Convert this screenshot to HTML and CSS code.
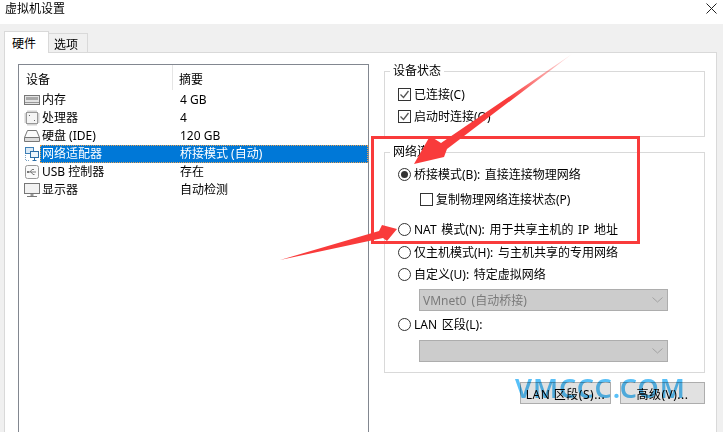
FILE: index.html
```html
<!DOCTYPE html>
<html>
<head>
    <meta charset="UTF-8">
    <title>虚拟机设置</title>
    <link rel="stylesheet" href="styles.css">
</head>
<body>
    <div class="titlebar">
        <span class="title">虚拟机设置</span>
        <svg class="close" width="11" height="11" viewBox="0 0 11 11"><path d="M0.5 0.5L10.5 10.5M10.5 0.5L0.5 10.5" stroke="#222" fill="none"/></svg>
    </div>

    <div class="tabs">
        <div class="tab active">硬件</div>
        <div class="tab">选项</div>
    </div>

    <div class="panel">
        <div class="list">
            <div class="list-head">
                <div class="head-name">设备</div>
                <div class="head-summary">摘要</div>
            </div>
            <div class="row">
                <svg class="icon" width="16" height="16" viewBox="0 0 16 16"><rect x="0.5" y="3.5" width="15" height="9" fill="#e4e4e4" stroke="#777"/><rect x="2" y="5" width="12" height="3" fill="#a8a8a8"/><path d="M1 10.5H15" stroke="#999"/></svg>
                <div class="row-body"><span class="name">内存</span><span class="summary">4 GB</span></div>
            </div>
            <div class="row">
                <svg class="icon" width="16" height="16" viewBox="0 0 16 16"><rect x="2.5" y="2.5" width="11" height="11" fill="#f4f4f4" stroke="#999"/><path d="M4 0.5V2M6 0.5V2M8 0.5V2M10 0.5V2M12 0.5V2M4 14V15.5M6 14V15.5M8 14V15.5M10 14V15.5M12 14V15.5M0.5 4H2M0.5 6H2M0.5 8H2M0.5 10H2M0.5 12H2M14 4H15.5M14 6H15.5M14 8H15.5M14 10H15.5M14 12H15.5" stroke="#a5a5a5" fill="none"/><rect x="5" y="5" width="1" height="1" fill="#666"/><rect x="10" y="10" width="1" height="1" fill="#666"/></svg>
                <div class="row-body"><span class="name">处理器</span><span class="summary">4</span></div>
            </div>
            <div class="row">
                <svg class="icon" width="16" height="16" viewBox="0 0 16 16"><path d="M0.5 9.5L3.5 2.5H12.5L15.5 9.5V13.5H0.5Z" fill="#fbfbfb" stroke="#777"/><path d="M0.5 9.5H15.5" stroke="#777"/><rect x="1" y="10" width="14" height="3" fill="#ddd"/></svg>
                <div class="row-body"><span class="name">硬盘 (IDE)</span><span class="summary">120 GB</span></div>
            </div>
            <div class="row selected">
                <svg class="icon" width="16" height="16" viewBox="0 0 16 16"><rect x="1.5" y="1.5" width="8" height="6" fill="#dcebf7" stroke="#3f7fb5"/><rect x="6.5" y="5.5" width="8" height="6" fill="#eef6fc" stroke="#2d6fa8"/><path d="M10.5 12V14M8.5 14.5H12.5" stroke="#2d6fa8"/><path d="M1.5 9V14.5H6" stroke="#7aa3c4" stroke-dasharray="1 1" fill="none"/></svg>
                <div class="row-body"><span class="name">网络适配器</span><span class="summary">桥接模式 (自动)</span></div>
            </div>
            <div class="row">
                <svg class="icon" width="16" height="16" viewBox="0 0 16 16"><rect x="1.5" y="1.5" width="13" height="13" rx="2" fill="#fafafa" stroke="#999"/><path d="M4 8H12M6 8L8 5.5H10M7 8L9 10.5H10.5" stroke="#777" fill="none"/><rect x="3" y="7" width="2" height="2" fill="#777"/></svg>
                <div class="row-body"><span class="name">USB 控制器</span><span class="summary">存在</span></div>
            </div>
            <div class="row">
                <svg class="icon" width="16" height="16" viewBox="0 0 16 16"><rect x="0.5" y="1.5" width="15" height="10" fill="#f2f2f2" stroke="#777"/><path d="M8 12V14" stroke="#999" stroke-width="3"/><path d="M3 14.5H13" stroke="#777"/></svg>
                <div class="row-body"><span class="name">显示器</span><span class="summary">自动检测</span></div>
            </div>
        </div>

        <div class="side">
            <fieldset class="group group-status">
                <legend>设备状态</legend>
                <div class="opt"><span class="check on"><svg width="11" height="11" viewBox="0 0 11 11"><path d="M1.5 5.5L4.5 8.5L9.5 2" stroke="#555" stroke-width="1.3" fill="none"/></svg></span>已连接(C)</div>
                <div class="opt"><span class="check on"><svg width="11" height="11" viewBox="0 0 11 11"><path d="M1.5 5.5L4.5 8.5L9.5 2" stroke="#555" stroke-width="1.3" fill="none"/></svg></span>启动时连接(O)</div>
            </fieldset>

            <fieldset class="group group-net">
                <legend>网络连接</legend>
                <div class="opt"><span class="radio on"></span>桥接模式(B): 直接连接物理网络</div>
                <div class="opt opt-sub"><span class="check"></span>复制物理网络连接状态(P)</div>
                <div class="opt opt-nat"><span class="radio"></span>NAT 模式(N): 用于共享主机的 IP 地址</div>
                <div class="opt opt-host"><span class="radio"></span>仅主机模式(H): 与主机共享的专用网络</div>
                <div class="opt"><span class="radio"></span>自定义(U): 特定虚拟网络</div>
                <div class="combo combo-vmnet">
                    <span>VMnet0 (自动桥接)</span>
                    <svg width="11" height="6" viewBox="0 0 11 6"><path d="M0.5 0.5L5.5 5L10.5 0.5" stroke="#a2a2a2" fill="none"/></svg>
                </div>
                <div class="opt opt-lan"><span class="radio"></span>LAN 区段(L):</div>
                <div class="combo combo-lan">
                    <span></span>
                    <svg width="11" height="6" viewBox="0 0 11 6"><path d="M0.5 0.5L5.5 5L10.5 0.5" stroke="#a2a2a2" fill="none"/></svg>
                </div>
            </fieldset>

            <div class="actions">
                <button class="btn btn-lan">LAN 区段(S)...</button>
                <button class="btn btn-adv">高级(V)...</button>
            </div>
        </div>
    </div>

    <!-- annotations on top of the dialog -->
    <svg class="marks" width="723" height="432" viewBox="0 0 723 432">
        <defs>
            <linearGradient id="fade" gradientUnits="userSpaceOnUse" x1="572" y1="54" x2="510" y2="100">
                <stop offset="0" stop-color="#f93b3b" stop-opacity="0.1"/>
                <stop offset="1" stop-color="#f93b3b"/>
            </linearGradient>
        </defs>
        <rect x="372.5" y="137.5" width="266" height="105" fill="none" stroke="#f93b3b" stroke-width="3"/>
        <polygon points="572,54 447,149 444,157 414,164 430,136 441,143" fill="url(#fade)"/>
        <polygon points="280,260 379,231 382,225 397,229 387,241 383,238" fill="#f93b3b"/>
    </svg>
    <div class="watermark">VMCCC.COM</div>
</body>
</html>
```

FILE: styles.css
```css
body {
    position: relative;
    width: 723px;
    height: 432px;
    margin: 0;
    overflow: hidden;
    background-color: #f0f0f0;
    color: #000;
    font-family: "Noto Sans", "Noto Sans CJK SC", sans-serif;
    font-size: 12px;
}
.titlebar {
    display: flex;
    justify-content: space-between;
    height: 24px;
    padding: 0 6px 0 5px;
    background-color: #fff;
}
.title {
    line-height: 17px;
}
.close {
    margin-top: 3px;
}
.tabs {
    display: flex;
    align-items: flex-end;
    height: 28px;
    padding-left: 4px;
}
.tab {
    box-sizing: border-box;
    width: 39px;
    height: 19px;
    border: 1px solid #d9d9d9;
    border-bottom: none;
    border-left: none;
    padding-left: 5px;
    line-height: 21px;
}
.tab.active {
    position: relative;
    z-index: 1;
    width: 45px;
    height: 22px;
    margin-bottom: -1px;
    border-left: 1px solid #d9d9d9;
    padding-left: 7px;
    background-color: #fff;
    line-height: 23px;
}
.panel {
    display: flex;
    gap: 15px;
    box-sizing: border-box;
    width: 713px;
    height: 400px;
    margin-left: 4px;
    border: 1px solid #d9d9d9;
    padding: 11px 0 0 13px;
    background-color: #fff;
}
.list {
    box-sizing: border-box;
    width: 351px;
    border: 1px solid #828790;
}
.list-head {
    display: flex;
    height: 26px;
    line-height: 26px;
}
.head-name {
    box-sizing: border-box;
    width: 154px;
    height: 25px;
    border-right: 1px solid #e5e5e5;
    padding-top: 2px;
    padding-left: 7px;
}
.head-summary {
    padding-top: 2px;
    padding-left: 6px;
}
.row {
    display: flex;
    align-items: center;
    height: 18px;
    padding-left: 5px;
}
.icon {
    flex: none;
}
.row-body {
    display: flex;
    flex: 1;
    box-sizing: border-box;
    height: 18px;
    padding-left: 2px;
    line-height: 18px;
}
.row.selected .row-body {
    outline: 1px dotted #e8a050;
    outline-offset: -1px;
    background-color: #0078d7;
    color: #fff;
}
.name {
    width: 138px;
}
.side {
    width: 321px;
}
.group {
    box-sizing: border-box;
    margin: 0;
    border: 1px solid #d9d9d9;
    padding: 0 0 0 13px;
}
.group legend {
    margin-left: -8px;
    padding: 0 3px;
    line-height: 16px;
}
.group-status {
    margin-top: -1px;
    padding-top: 4px;
    padding-bottom: 9px;
}
.group-net {
    margin-top: 7px;
    padding-top: 3px;
    padding-bottom: 10px;
}
.opt {
    display: flex;
    align-items: center;
    gap: 3px;
    height: 22px;
    word-spacing: 1.5px;
}
.opt-sub {
    margin-top: 3px;
    margin-left: 22px;
}
.opt-nat {
    margin-top: 8px;
}
.opt-host {
    margin-top: 1px;
}
.opt-lan {
    margin-top: 2px;
}
.check {
    display: flex;
    align-items: center;
    justify-content: center;
    box-sizing: border-box;
    width: 13px;
    height: 13px;
    border: 1px solid #333;
    background-color: #fff;
}
.radio {
    display: flex;
    align-items: center;
    justify-content: center;
    box-sizing: border-box;
    width: 13px;
    height: 13px;
    border: 1px solid #333;
    border-radius: 50%;
    background-color: #fff;
}
.radio.on::after {
    content: "";
    width: 7px;
    height: 7px;
    border-radius: 50%;
    background-color: #333;
}
.combo {
    display: flex;
    align-items: center;
    justify-content: space-between;
    box-sizing: border-box;
    width: 249px;
    height: 22px;
    margin-left: 21px;
    border: 1px solid #adadad;
    padding: 0 4px 0 3px;
    background-color: #ccc;
    color: #7a7a7a;
    word-spacing: 2px;
}
.combo-vmnet {
    margin-top: 4px;
}
.combo-lan {
    margin-top: 5px;
}
.actions {
    display: flex;
    justify-content: flex-end;
    gap: 9px;
    margin-top: 9px;
}
.btn {
    box-sizing: border-box;
    height: 22px;
    border: 1px solid #adadad;
    padding: 1px 0 0;
    background-color: #e1e1e1;
    color: #000;
    font-family: inherit;
    font-size: 12px;
    letter-spacing: 0.5px;
}
.btn-lan {
    width: 91px;
}
.btn-adv {
    width: 85px;
}
.marks {
    position: absolute;
    left: 0;
    top: 0;
}
.watermark {
    position: absolute;
    left: 515px;
    top: 369px;
    color: #58c0f8;
    mix-blend-mode: multiply;
    font-family: "Noto Sans", sans-serif;
    font-size: 27px;
    font-weight: 600;
    letter-spacing: 1px;
    line-height: 38px;
}
```
